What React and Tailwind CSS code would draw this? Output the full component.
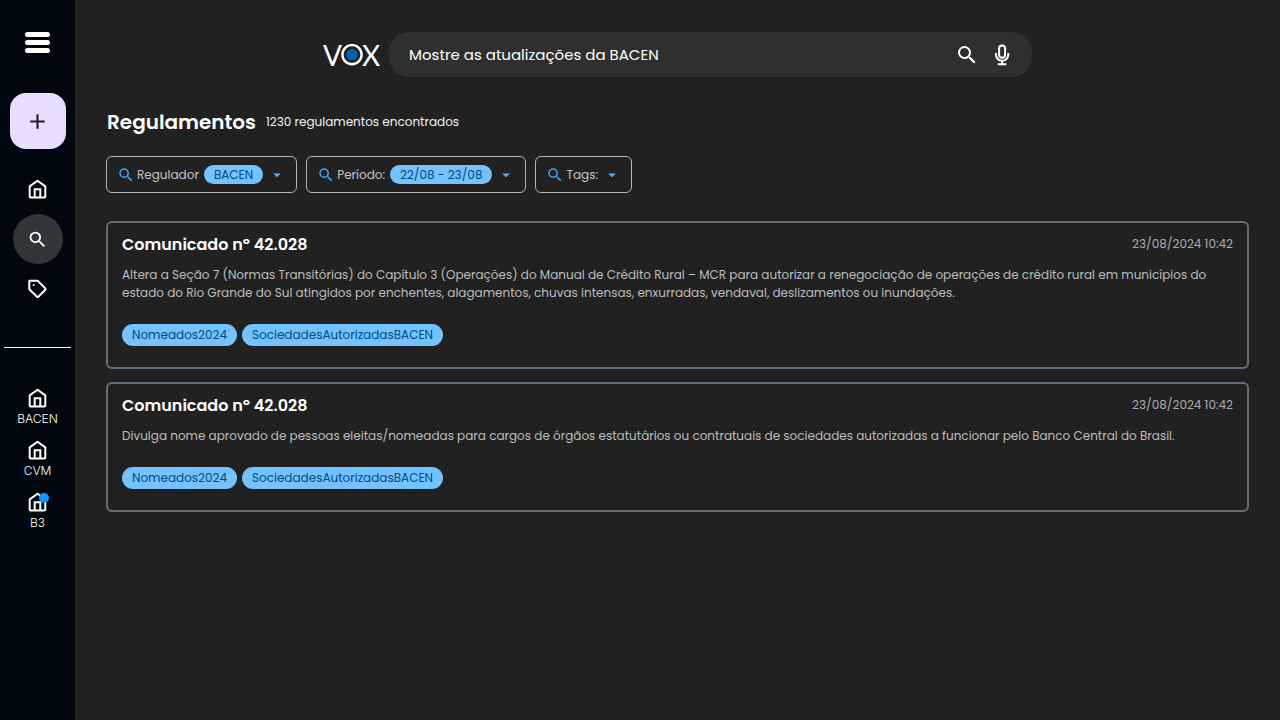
import { MdAdd, MdArrowDropDown, MdSearch } from "react-icons/md";

function HomeIcon() {
  return (
    <svg viewBox="0 0 21 20" className="h-5 w-[21px]" fill="none" stroke="currentColor" strokeWidth="2" aria-hidden="true">
      <path d="M2.7 7.4 10.5 1.7l7.8 5.7v10.1a1 1 0 0 1-1 1H3.7a1 1 0 0 1-1-1z" strokeLinejoin="round" />
      <path d="M7.7 18.5v-8.2h5.6v8.2" />
    </svg>
  );
}

function TagIcon() {
  return (
    <svg viewBox="0 0 21 20" className="h-5 w-[21px]" fill="none" stroke="currentColor" strokeWidth="2" strokeLinejoin="round" aria-hidden="true">
      <path d="M2.3 1.8h8.4l7.6 7.6a1 1 0 0 1 0 1.4l-6.9 6.9a1 1 0 0 1-1.4 0L2.3 10.2z" />
      <circle cx="6.7" cy="6.1" r="1" fill="currentColor" stroke="none" />
    </svg>
  );
}

function MicIcon() {
  return (
    <svg viewBox="0 0 24 24" className="size-6" fill="none" stroke="currentColor" strokeWidth="2" aria-hidden="true">
      <rect x="9.1" y="2.4" width="6" height="12.4" rx="3" />
      <path d="M5.9 10v1.6a6.2 6.2 0 0 0 12.4 0V10M12.1 18v3.4M7.8 21.2h8.6" />
    </svg>
  );
}

function Logo() {
  return (
    <div className="flex h-6 items-center font-[Lato] text-[28px] leading-[22px] text-white" role="img" aria-label="VOX">
      <span>V</span>
      <svg viewBox="0 0 22 22" className="-mx-px size-[22px]" aria-hidden="true">
        <circle cx="11" cy="10.6" r="9.6" fill="none" stroke="currentColor" strokeWidth="2.4" />
        <circle cx="11" cy="10.6" r="5.7" fill="#0061ae" />
      </svg>
      <span>X</span>
    </div>
  );
}

function Chip({ children, className = "h-[22px]" }) {
  return (
    <span className={`flex items-center rounded-full bg-[#74c2ff] px-2.5 text-xs text-[#004b84] ${className}`}>
      {children}
    </span>
  );
}

function Filter({ label, value }) {
  return (
    <button type="button" className="flex h-[37px] items-center rounded-md border border-[#b4b9bd] px-2.5 text-xs text-[#c4c7c9]">
      <MdSearch className="mr-0.5 size-[18px] text-[#3fa6f5]" />
      {label}
      {value && <Chip className="ml-[5px] h-[19px]">{value}</Chip>}
      <MdArrowDropDown className="ml-[5px] size-[18px] text-[#55b2fa]" />
    </button>
  );
}

const regulators = [
  { name: "BACEN" },
  { name: "CVM" },
  { name: "B3", unread: true },
];

const notices = [
  {
    title: "Comunicado nº 42.028",
    date: "23/08/2024 10:42",
    text: "Altera a Seção 7 (Normas Transitórias) do Capítulo 3 (Operações) do Manual de Crédito Rural – MCR para autorizar a renegociação de operações de crédito rural em municípios do estado do Rio Grande do Sul atingidos por enchentes, alagamentos, chuvas intensas, enxurradas, vendaval, deslizamentos ou inundações.",
    tags: ["Nomeados2024", "SociedadesAutorizadasBACEN"],
  },
  {
    title: "Comunicado nº 42.028",
    date: "23/08/2024 10:42",
    text: "Divulga nome aprovado de pessoas eleitas/nomeadas para cargos de órgãos estatutários ou contratuais de sociedades autorizadas a funcionar pelo Banco Central do Brasil.",
    tags: ["Nomeados2024", "SociedadesAutorizadasBACEN"],
  },
];

function Sidebar() {
  return (
    <aside className="flex w-[75px] shrink-0 flex-col items-center bg-[#00070e] pt-8 text-white">
      <button type="button" aria-label="Menu" className="flex w-[25px] flex-col gap-[3px]">
        <span className="h-[5px] w-full rounded-full bg-white" />
        <span className="h-[5px] w-full rounded-full bg-white" />
        <span className="h-[5px] w-full rounded-full bg-white" />
      </button>
      <button type="button" aria-label="Novo" className="mt-10 flex size-14 items-center justify-center rounded-2xl bg-[#eaddff] text-[#21182b]">
        <MdAdd className="size-[25px]" />
      </button>
      <nav className="mt-[15px] flex w-full flex-col items-center">
        <a href="#inicio" aria-label="Início" className="flex size-[50px] items-center justify-center"><HomeIcon /></a>
        <a href="#busca" aria-label="Busca" className="flex size-[50px] items-center justify-center rounded-full bg-[#31363b]"><MdSearch className="size-[21px]" /></a>
        <a href="#tags" aria-label="Tags" className="flex size-[50px] items-center justify-center"><TagIcon /></a>
      </nav>
      <hr className="mt-[33px] w-[67px] border-white" />
      <nav className="mt-10 flex flex-col gap-2.5">
        {regulators.map((r) => (
          <a key={r.name} href={`#${r.name}`} className="flex flex-col items-center font-[Inter] text-xs leading-[22px] font-light">
            <span className="relative">
              <HomeIcon />
              {r.unread && <span className="absolute top-px -right-px size-2.5 rounded-full bg-[#1494ff]" />}
            </span>
            {r.name}
          </a>
        ))}
      </nav>
    </aside>
  );
}

export default function App() {
  return (
    <div className="flex min-h-screen bg-[#212121] font-[Poppins,Inter,sans-serif]">
      <Sidebar />
      <main className="min-w-0 flex-1 px-[31px] pt-8">
        <header className="flex items-center justify-center gap-[9px]">
          <Logo />
          <form role="search" className="flex h-[45px] w-full max-w-[643px] items-center rounded-[20px] bg-[#2f2f2f] pr-[18px] pl-5 text-white">
            <input aria-label="Pesquisar" defaultValue="Mostre as atualizações da BACEN" className="h-6 min-w-0 flex-1 bg-transparent text-[15px] outline-none" />
            <button type="button" aria-label="Pesquisar"><MdSearch className="size-6" /></button>
            <button type="button" aria-label="Pesquisar por voz" className="ml-[11px]"><MicIcon /></button>
          </form>
        </header>
        <div className="mt-[30px] flex h-[30px] items-center gap-2.5 pl-px">
          <h1 className="text-xl font-semibold text-white">Regulamentos</h1>
          <p className="text-xs text-[#f2f2f2]">1230 regulamentos encontrados</p>
        </div>
        <div className="mt-[19px] flex flex-wrap gap-[9px]">
          <Filter label="Regulador" value="BACEN" />
          <Filter label="Período:" value="22/08 - 23/08" />
          <Filter label="Tags:" />
        </div>
        <section className="mt-7 flex flex-col gap-[13px]">
          {notices.map((n, i) => (
            <article key={i} className="rounded-md border-2 border-[#636e78] px-3.5 pt-2.5 pb-[21px]">
              <div className="flex items-start justify-between">
                <h2 className="text-base font-semibold text-white">{n.title}</h2>
                <time className="text-xs leading-[22px] text-[#a9abb0]">{n.date}</time>
              </div>
              <p className="mt-[9px] text-xs leading-[18px] text-[#bdbdbd]">{n.text}</p>
              <div className="mt-[22px] flex flex-wrap gap-[5px]">
                {n.tags.map((t) => <Chip key={t}>{t}</Chip>)}
              </div>
            </article>
          ))}
        </section>
      </main>
    </div>
  );
}
